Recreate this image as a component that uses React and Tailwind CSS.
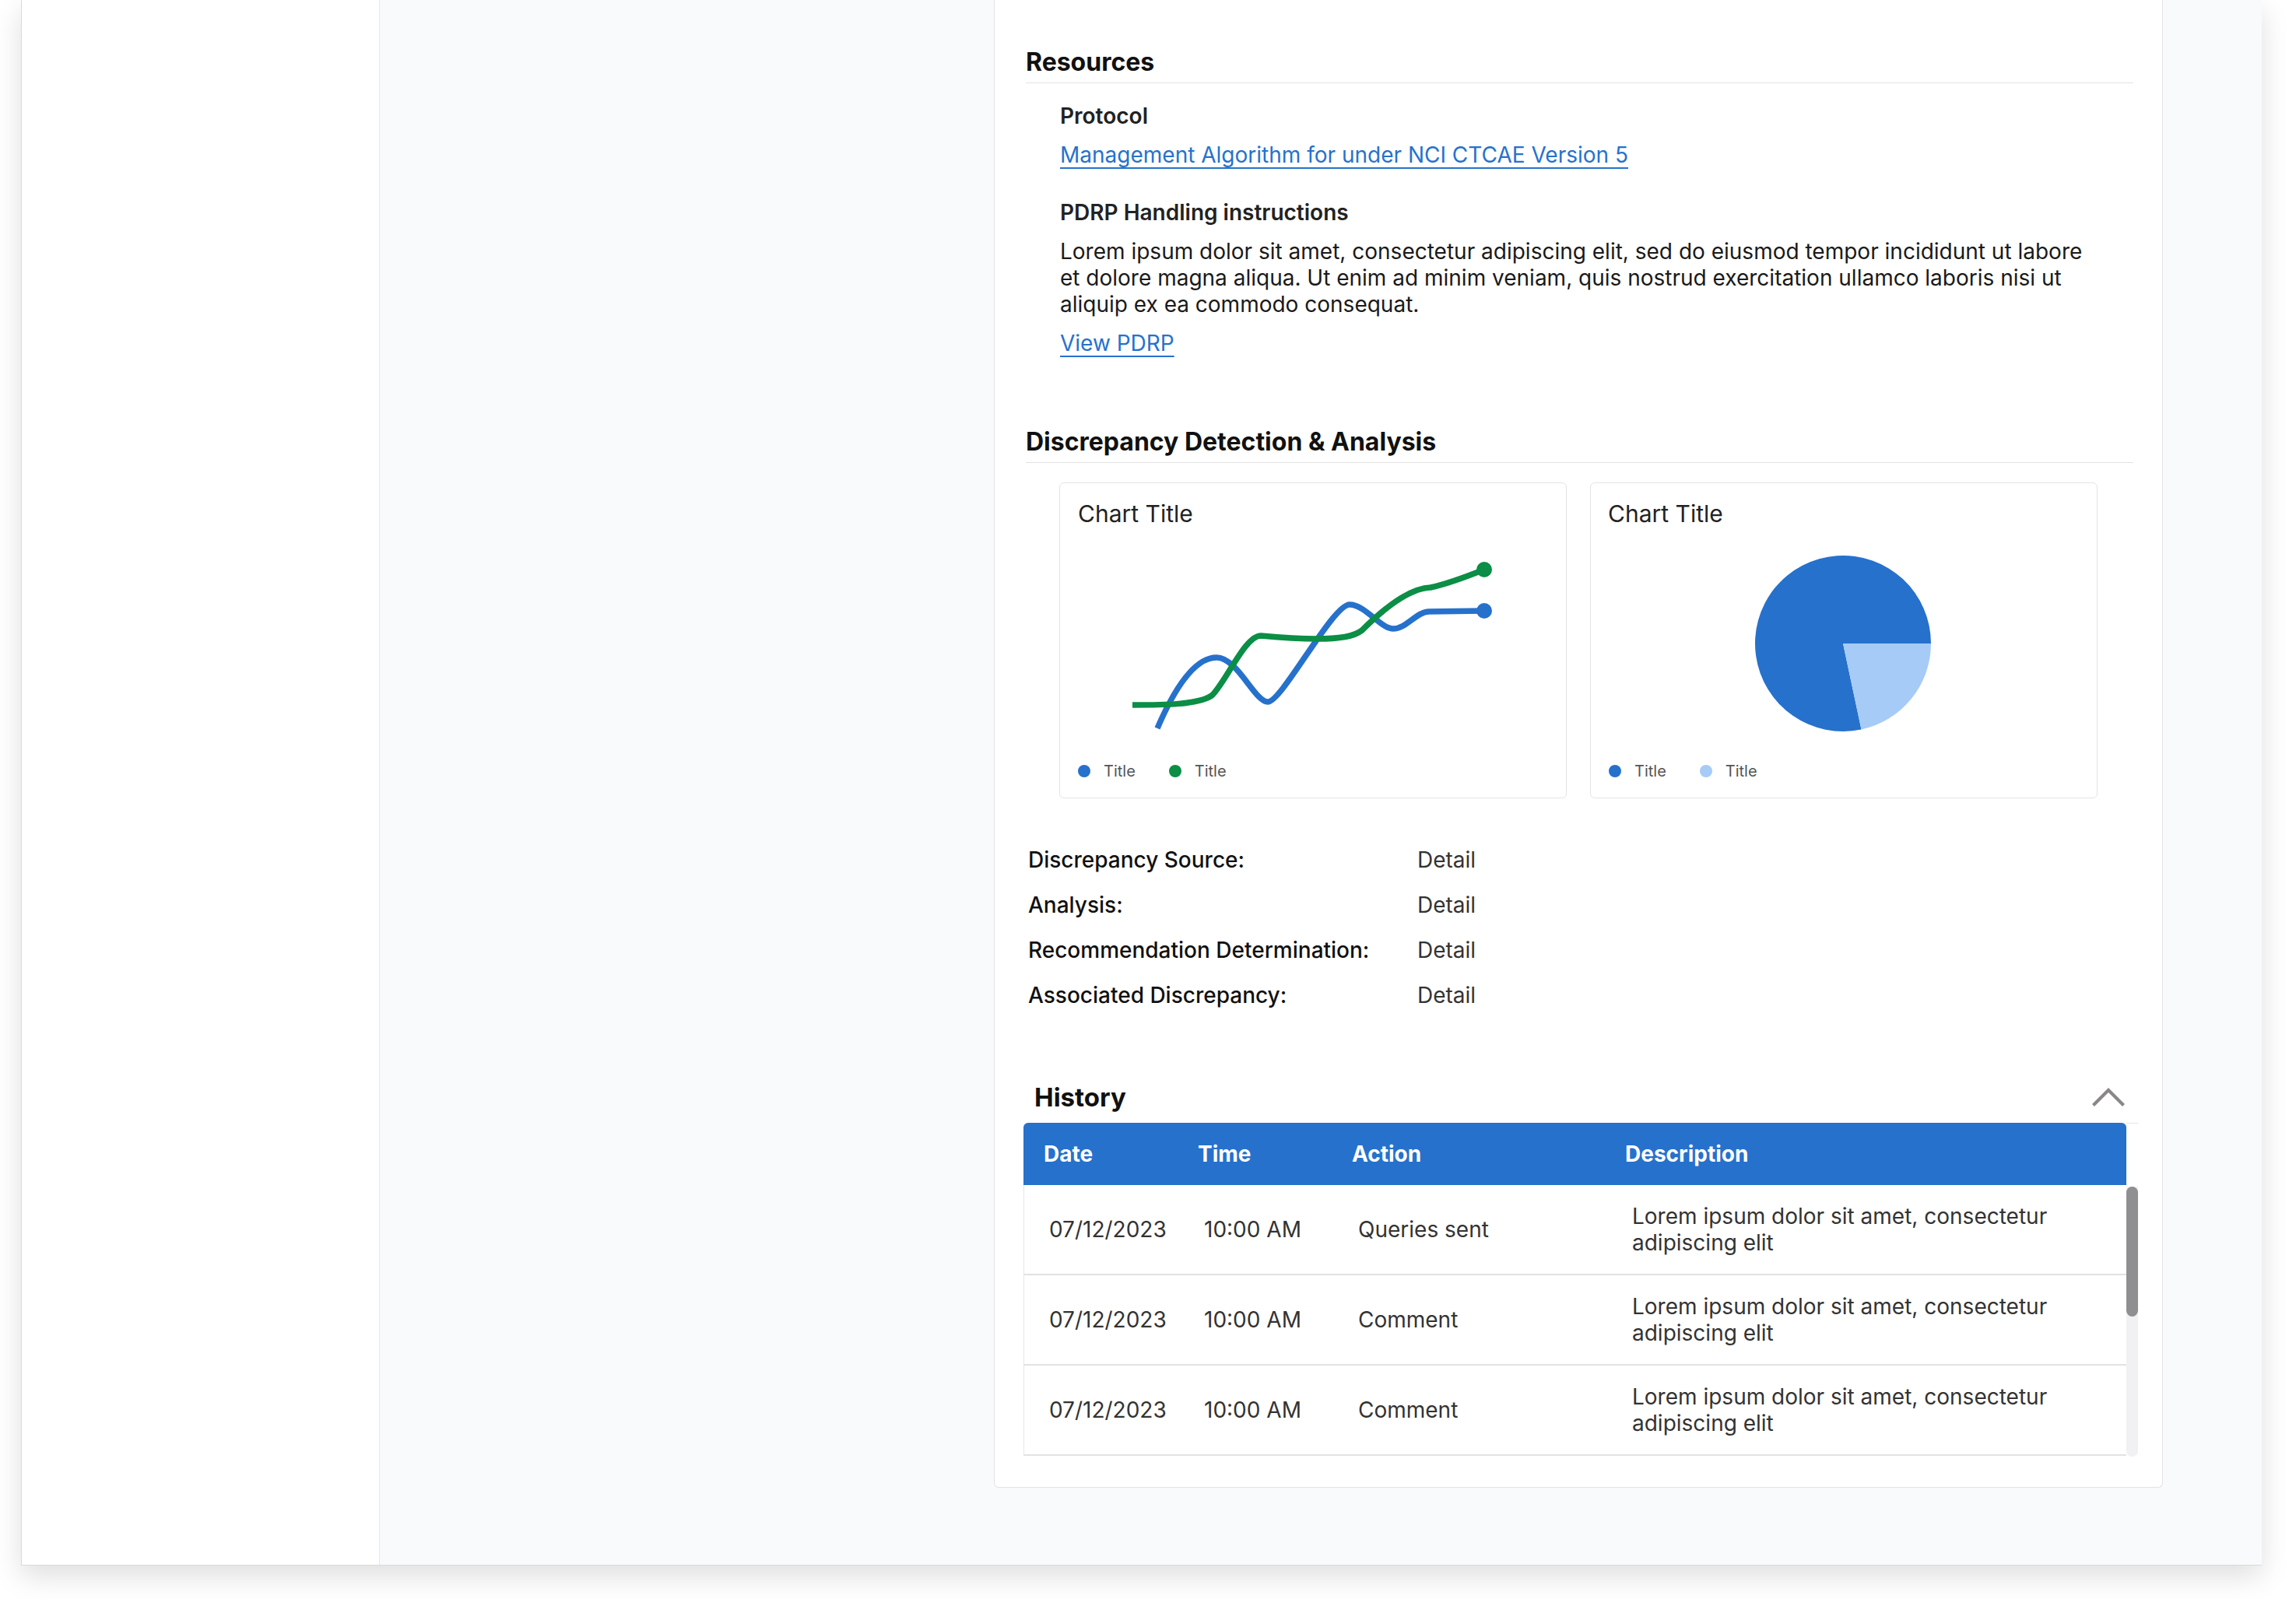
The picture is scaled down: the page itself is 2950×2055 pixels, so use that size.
import React from "react";

function ChevronUp() {
  return (
    <svg width="42" height="26" viewBox="0 0 42 26" fill="none">
      <polyline points="1.5,23.5 21,4 40.5,23.5" stroke="#8a8788" strokeWidth="4.2" strokeLinecap="butt" strokeLinejoin="miter" fill="none" />
    </svg>
  );
}

function Legend({ c1, c2 }) {
  return (
    <div className="flex items-center h-[24px] px-[23px]">
      <span className="w-[16px] h-[16px] rounded-full" style={{ background: c1 }} />
      <span className="ml-[17px] text-[20px] leading-[24px] text-[#555]">Title</span>
      <span className="ml-[43px] w-[16px] h-[16px] rounded-full" style={{ background: c2 }} />
      <span className="ml-[17px] text-[20px] leading-[24px] text-[#555]">Title</span>
    </div>
  );
}

function LineChartCard() {
  return (
    <div className="w-[652px] h-[406px] border border-[#e4e4e4] rounded-[6px] bg-white flex flex-col">
      <div className="pt-[21px] px-[23px] text-[30px] leading-[36px] text-[#222]">Chart Title</div>
      <svg width="650" height="301" viewBox="0 0 650 301" className="block">
        <path
          d="M125 258 C150 200, 175 167, 201 167 C228 167, 250 224, 267 224 C285 224, 350 99, 372 99 C392 99, 412 130, 428 130 C445 130, 458 108, 474 108 L545 107"
          stroke="#2671cc"
          strokeWidth="7.5"
          fill="none"
          strokeLinejoin="round"
        />
        <path
          d="M93 228 C130 228, 180 228, 196 215 C215 195, 238 139, 258 139 C290 142, 315 143, 330 143 C360 143, 378 140, 388 132 C420 100, 450 78, 476 77 C500 72, 530 60, 545 54"
          stroke="#0b8e45"
          strokeWidth="7.5"
          fill="none"
          strokeLinejoin="round"
        />
        <circle cx="545" cy="107" r="10" fill="#2671cc" />
        <circle cx="545" cy="54" r="10" fill="#0b8e45" />
      </svg>
      <Legend c1="#2671cc" c2="#0b8e45" />
    </div>
  );
}

function PieChartCard() {
  return (
    <div className="w-[652px] h-[406px] border border-[#e4e4e4] rounded-[6px] bg-white flex flex-col">
      <div className="pt-[21px] px-[22px] text-[30px] leading-[36px] text-[#222]">Chart Title</div>
      <svg width="650" height="301" viewBox="0 0 650 301" className="block">
        <path d="M324 149 L347.5 259.5 A113 113 0 1 1 437 149 Z" fill="#2671cc" />
        <path d="M324 149 L437 149 A113 113 0 0 1 347.5 259.5 Z" fill="#a6cbf7" />
      </svg>
      <Legend c1="#2671cc" c2="#a6cbf7" />
    </div>
  );
}

const rows = [
  { date: "07/12/2023", time: "10:00 AM", action: "Queries sent" },
  { date: "07/12/2023", time: "10:00 AM", action: "Comment" },
  { date: "07/12/2023", time: "10:00 AM", action: "Comment" },
];

export default function App() {
  return (
    <div className="w-[2950px] h-[2055px] bg-white overflow-hidden font-['Inter',sans-serif] text-[#1a1a1a]">
      <div className="ml-[27px] w-[2879px] h-[2012px] flex border-l border-b border-[#dadada] shadow-[0_14px_34px_rgba(0,0,0,0.13)]">
        <div className="w-[460px] h-full bg-white border-r border-[#e8e9ee]" />
        <div className="flex-1 h-full bg-[#f9fafc] pl-[789px]">
          <div className="w-[1502px] bg-white border-x border-b border-[#e3e3e6] rounded-b-[6px] pt-[61px] pl-[40px] pr-[37px] pb-[39px]">
            {/* Resources */}
            <div className="text-[32px] leading-[38px] font-bold text-[#111] pb-[7px] border-b border-[#e3e3e3]">Resources</div>
            <div className="px-[44px] pt-[25px]">
              <div className="text-[28px] leading-[34px] font-semibold text-[#222]">Protocol</div>
              <div className="mt-[16px] text-[28px] leading-[34px]">
                <span className="text-[#2672cc] underline underline-offset-[6px] decoration-[1.5px]">
                  Management Algorithm for under NCI CTCAE Version 5
                </span>
              </div>
              <div className="mt-[40px] text-[28px] leading-[34px] font-semibold text-[#222]">PDRP Handling instructions</div>
              <p className="mt-[16px] text-[28px] leading-[34px] text-[#1a1a1a]">
                Lorem ipsum dolor sit amet, consectetur adipiscing elit, sed do eiusmod tempor incididunt ut labore et dolore magna aliqua. Ut enim ad minim veniam, quis nostrud exercitation ullamco laboris nisi ut aliquip ex ea commodo consequat.
              </p>
              <div className="mt-[16px] text-[28px] leading-[34px]">
                <span className="text-[#2672cc] underline underline-offset-[6px] decoration-[1.5px]">View PDRP</span>
              </div>
            </div>

            {/* Discrepancy */}
            <div className="mt-[91px] text-[32px] leading-[38px] font-bold text-[#111] pb-[7px] border-b border-[#e3e3e3]">
              Discrepancy Detection &amp; Analysis
            </div>
            <div className="mt-[25px] pl-[43px] flex gap-[30px]">
              <LineChartCard />
              <PieChartCard />
            </div>

            <div className="mt-[62px] pl-[3px] grid grid-cols-[500px_1fr] gap-y-[24px] text-[28px] leading-[34px]">
              <div className="font-medium text-[#111]">Discrepancy Source:</div>
              <div className="text-[#333]">Detail</div>
              <div className="font-medium text-[#111]">Analysis:</div>
              <div className="text-[#333]">Detail</div>
              <div className="font-medium text-[#111]">Recommendation Determination:</div>
              <div className="text-[#333]">Detail</div>
              <div className="font-medium text-[#111]">Associated Discrepancy:</div>
              <div className="text-[#333]">Detail</div>
            </div>

            {/* History */}
            <div className="mt-[94px] -ml-[3px] w-[1432px]">
              <div className="flex items-center justify-between h-[40px] pl-[14px] pr-[17px]">
                <div className="text-[33px] leading-[40px] font-bold text-[#111]">History</div>
                <ChevronUp />
              </div>
              <div className="mt-[13px] flex">
                <div className="w-[1417px]">
                  <div className="h-[80px] bg-[#2671cc] rounded-t-[6px] grid grid-cols-[198px_198px_351px_670px] items-center text-white font-bold text-[28px] leading-[34px]">
                    <div className="pl-[26px]">Date</div>
                    <div className="pl-[26px]">Time</div>
                    <div className="pl-[26px]">Action</div>
                    <div className="pl-[26px]">Description</div>
                  </div>
                  {rows.map((r, i) => (
                    <div
                      key={i}
                      className="h-[116px] border-b-2 border-b-[#e2e2e2] border-l border-l-[#e6e6e6] grid grid-cols-[198px_198px_351px_670px] items-center text-[28px] leading-[34px] text-[#333]"
                    >
                      <div className="pl-[32px]">{r.date}</div>
                      <div className="pl-[33px]">{r.time}</div>
                      <div className="pl-[33px]">{r.action}</div>
                      <div className="pl-[34px] pr-[40px]">Lorem ipsum dolor sit amet, consectetur adipiscing elit</div>
                    </div>
                  ))}
                </div>
                <div className="w-[15px] border-t border-[#e6e6e6]">
                  <div className="mt-[81px] h-[347px] bg-[#f1f1f3] rounded-b-[7px]">
                    <div className="h-[167px] w-[15px] bg-[#8f8f91] rounded-full" />
                  </div>
                </div>
              </div>
            </div>
          </div>
        </div>
      </div>
    </div>
  );
}
